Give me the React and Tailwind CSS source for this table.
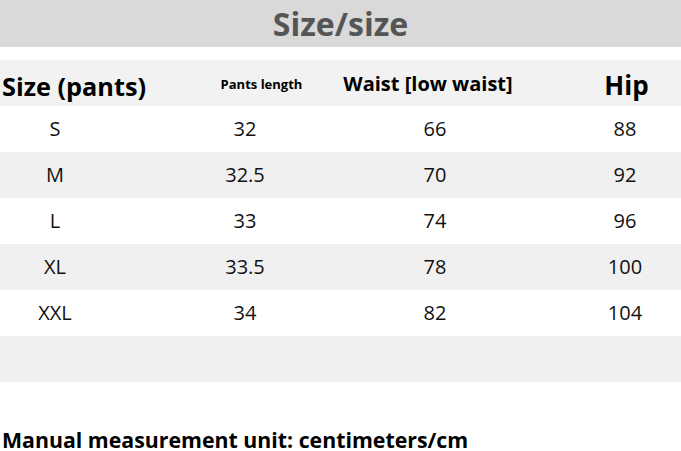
import React from 'react';

const rows = [
  { size: 'S', length: '32', waist: '66', hip: '88' },
  { size: 'M', length: '32.5', waist: '70', hip: '92' },
  { size: 'L', length: '33', waist: '74', hip: '96' },
  { size: 'XL', length: '33.5', waist: '78', hip: '100' },
  { size: 'XXL', length: '34', waist: '82', hip: '104' },
];

const App = () => {
  return (
    <div className="w-[681px] h-[451px] bg-white overflow-hidden font-['Open_Sans',sans-serif] text-black">
      <div className="h-[47px] bg-[#d9d9d9] flex items-center justify-center">
        <h1 className="text-[32px] font-bold text-[#555555] leading-none">Size/size</h1>
      </div>

      <div className="mt-[13px]">
        {/* header row */}
        <div className="h-[46px] bg-[#f2f2f2] overflow-hidden">
          <div className="-ml-[40px] grid grid-cols-[repeat(4,190px)] items-start font-bold leading-none whitespace-nowrap">
            <div className="pl-[42px] pt-[14px] text-[25.3px] text-left">Size (pants)</div>
            <div className="pl-[33px] pt-[18px] text-[13px] text-center">Pants length</div>
            <div className="pr-[14px] pt-[14px] text-[20px] text-center">Waist [low waist]</div>
            <div className="pl-[3px] pt-[12px] text-[26px] text-center">Hip</div>
          </div>
        </div>

        {rows.map((row, i) => (
          <div
            key={row.size}
            className={`h-[46px] overflow-hidden ${i % 2 === 1 ? 'bg-[#f0f0f0]' : 'bg-white'}`}
          >
            <div className="-ml-[40px] h-full grid grid-cols-[repeat(4,190px)] items-center text-[20px] leading-none text-center text-[#111111]">
              <div>{row.size}</div>
              <div>{row.length}</div>
              <div>{row.waist}</div>
              <div>{row.hip}</div>
            </div>
          </div>
        ))}

        <div className="h-[46px] bg-[#f0f0f0]"></div>
      </div>

      <p className="mt-[49px] pl-[2px] text-[21.3px] font-bold leading-[18px] whitespace-nowrap">
        Manual measurement unit: centimeters/cm
      </p>
    </div>
  );
};

export default App;
